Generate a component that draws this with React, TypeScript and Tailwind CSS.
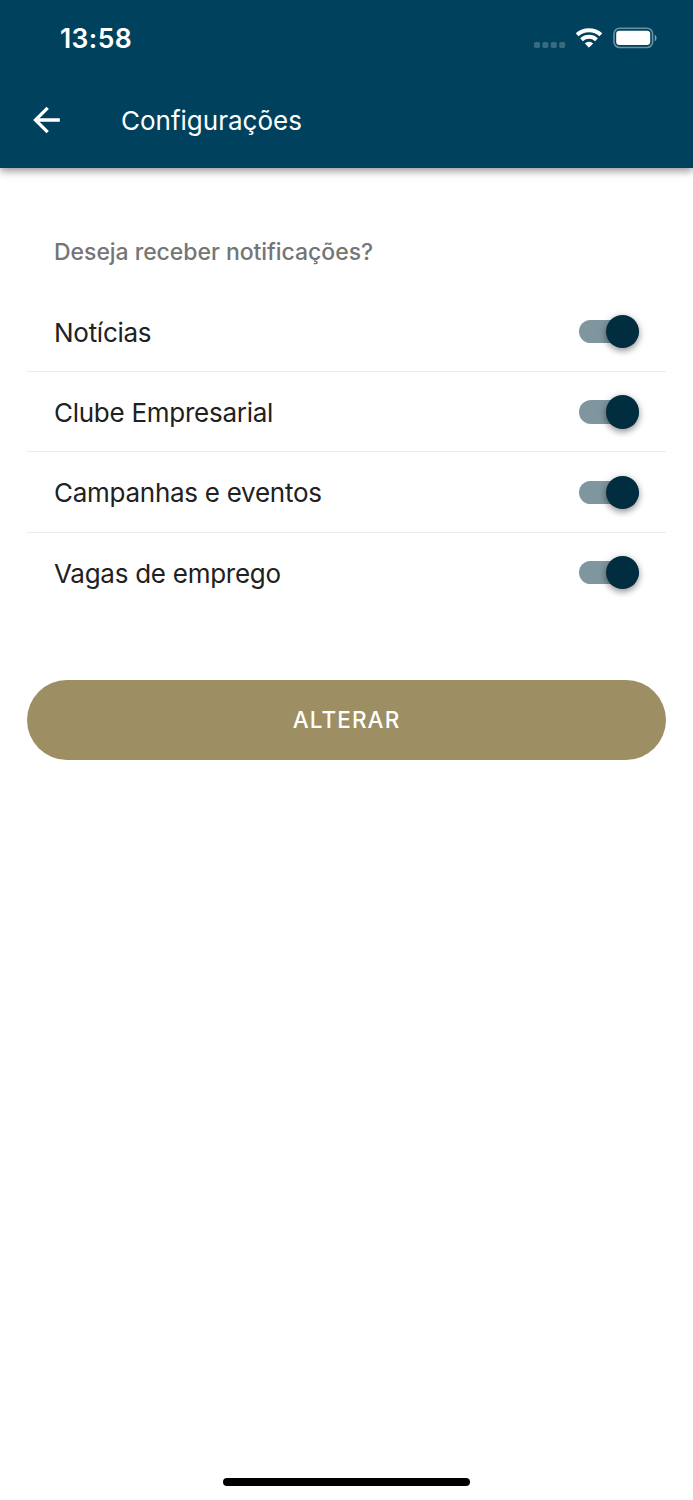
import { useState } from "react";

interface SwitchProps {
  label: string;
  checked: boolean;
  onChange: () => void;
}

function Switch({ label, checked, onChange }: SwitchProps) {
  return (
    <button
      type="button"
      role="switch"
      aria-checked={checked}
      aria-label={label}
      onClick={onChange}
      className="mt-px flex h-[33.5px] w-[60.5px] items-center"
    >
      <span className="flex h-[23.5px] w-full items-center rounded-full bg-[#80969f]">
        <span
          className={`size-[33.5px] shrink-0 rounded-full bg-[#002d40] shadow-[0_3px_6px_rgba(0,0,0,0.32),0_1px_9px_rgba(0,0,0,0.16)] ${checked ? "ml-auto" : ""}`}
        />
      </span>
    </button>
  );
}

function StatusBar() {
  return (
    <div className="flex h-[73.5px] items-start justify-between pl-[60px] pr-[35px]">
      <span className="mt-[21px] text-[26.5px] font-[560] leading-[34px] tracking-[0.4px]">
        13:58
      </span>
      <div className="mt-[26px] flex h-6 items-center">
        <svg width="32" height="6" viewBox="0 0 32 6" className="mt-[13px]" fill="#ffffff" fillOpacity="0.22">
          <rect x="0" y="0" width="6" height="6" rx="1.8" />
          <rect x="8.4" y="0" width="6" height="6" rx="1.8" />
          <rect x="16.8" y="0" width="6" height="6" rx="1.8" />
          <rect x="25.2" y="0" width="6" height="6" rx="1.8" />
        </svg>
        <svg width="28" height="22" viewBox="-14 -21 28 22" className="ml-[9px]" fill="none" stroke="#ffffff">
          <path d="M-11.9 -13.2A17.8 17.8 0 0 1 11.9 -13.2" strokeWidth="4.1" />
          <path d="M-7.5 -8.3A11.2 11.2 0 0 1 7.5 -8.3" strokeWidth="4.1" />
          <path
            d="M-3.7 -4.5A6 6 0 0 1 3.7 -4.5L0 -0.8z"
            fill="#ffffff"
            strokeWidth="1"
            strokeLinejoin="round"
          />
        </svg>
        <svg width="45" height="22" viewBox="0 0 45 22" className="ml-[10px]">
          <rect x="1" y="1.3" width="38.6" height="19.2" rx="5.6" fill="none" stroke="#ffffff" strokeOpacity="0.42" strokeWidth="1.6" />
          <rect x="3.2" y="3.8" width="34" height="14.2" rx="3.3" fill="#ffffff" />
          <path d="M41.8 7.7c2.3 1 2.3 5.6 0 6.6z" fill="#ffffff" fillOpacity="0.5" />
        </svg>
      </div>
    </div>
  );
}

const topics = [
  { id: "news", label: "Notícias" },
  { id: "club", label: "Clube Empresarial" },
  { id: "events", label: "Campanhas e eventos" },
  { id: "jobs", label: "Vagas de emprego" },
];

export default function App() {
  const [enabled, setEnabled] = useState<Record<string, boolean>>({
    news: true,
    club: true,
    events: true,
    jobs: true,
  });

  const toggle = (id: string) =>
    setEnabled((prev) => ({ ...prev, [id]: !prev[id] }));

  return (
    <div className="flex h-[1500px] w-[693px] flex-col bg-white font-['Inter',sans-serif]">
      <header className="h-[167.5px] shrink-0 bg-[#00425d] text-white shadow-[0_3px_8px_rgba(0,0,0,0.42)]">
        <StatusBar />
        <div className="flex h-[93px] items-center pl-[26px]">
          <button type="button" aria-label="Voltar">
            <svg width="41" height="40" viewBox="0 0 24 24" fill="currentColor">
              <path d="M20 11H7.83l5.59-5.59L12 4l-8 8 8 8 1.41-1.41L7.83 13H20v-2z" />
            </svg>
          </button>
          <h1 className="ml-[54px] mt-[2px] text-[26px] leading-8">
            Configurações
          </h1>
        </div>
      </header>

      <main className="flex grow flex-col px-[27px] pt-[44px]">
        <h2 className="flex h-20 items-center pl-[27px] pt-[2px] text-[23px] font-medium tracking-[-0.04px] text-[#757575]">
          Deseja receber notificações?
        </h2>
        <ul>
          {topics.map((topic) => (
            <li
              key={topic.id}
              className="flex h-[80.35px] items-center justify-between border-b border-[#ebebeb] pl-[27px] pr-[27px] last:border-transparent"
            >
              <span className="mt-[2px] text-[26px] tracking-[-0.27px] text-[#212121]">
                {topic.label}
              </span>
              <Switch
                label={topic.label}
                checked={enabled[topic.id]}
                onChange={() => toggle(topic.id)}
              />
            </li>
          ))}
        </ul>
        <button
          type="button"
          className="mt-[67px] flex h-20 w-full shrink-0 items-center justify-center rounded-full bg-[#9d8e63] text-[22.5px] font-[450] tracking-[1.1px] text-white"
        >
          ALTERAR
        </button>
      </main>

      <div className="mb-[14px] h-[8.5px] w-[247px] shrink-0 self-center rounded-full bg-black" />
    </div>
  );
}
